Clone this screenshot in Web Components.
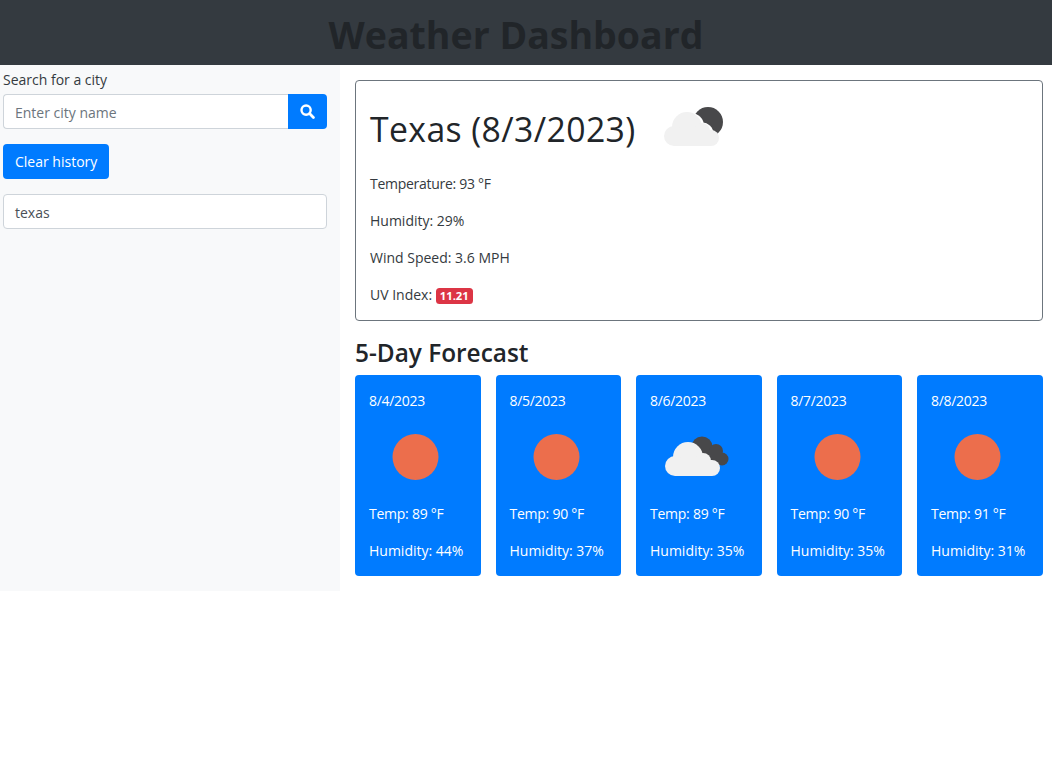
<!DOCTYPE html>
<html lang="en">
<head>
<meta charset="utf-8">
<title>Weather Dashboard</title>
<style>
  body { margin: 0; background: #fff; color: #212529; font-family: "Open Sans", "Noto Sans", sans-serif; font-size: 14px; line-height: 22.5px; }
</style>
</head>
<body>
<weather-app></weather-app>

<script>
// icons are laid out in a 94x94 box, same as the png they stand in for
const CLOUD = `
  <circle cx="38" cy="47" r="15"/><circle cx="25" cy="56" r="10"/>
  <circle cx="53" cy="51" r="8"/><circle cx="62" cy="58" r="8"/>
  <rect x="25" y="50" width="37" height="16"/>`;

const ICONS = {
  sun: { box: '0 0 94 94', w: 94, h: 94, body: `<circle cx="46.5" cy="47" r="23" fill="#ec6e4c"/>` },
  clouds: {
    box: '0 0 94 94', w: 94, h: 94,
    body: `<g fill="#48484a"><circle cx="52" cy="37" r="10.5"/><circle cx="66" cy="41" r="7"/><circle cx="72" cy="49" r="6.5"/><rect x="50" y="40" width="22" height="15"/></g>
           <g fill="#f1f1f1">${CLOUD}</g>`
  },
  moon: {
    box: '0 18 94 62', w: 94, h: 62,
    body: `<circle cx="59" cy="42" r="15" fill="#48484a"/>
           <g fill="#fff"><circle cx="42" cy="46" r="13"/><circle cx="53" cy="54" r="11.5"/><circle cx="62" cy="60" r="8"/></g>
           <g fill="#f1f1f1">${CLOUD}</g>`
  }
};

class WeatherIcon extends HTMLElement {
  connectedCallback() {
    const icon = ICONS[this.getAttribute('type')] || ICONS.sun;
    this.attachShadow({ mode: 'open' }).innerHTML = `
      <style>:host { display: block; line-height: 0; } svg { display: block; }</style>
      <svg width="${icon.w}" height="${icon.h}" viewBox="${icon.box}">${icon.body}</svg>`;
  }
}

class AppHeader extends HTMLElement {
  connectedCallback() {
    this.attachShadow({ mode: 'open' }).innerHTML = `
      <style>
        :host { display: block; background: #343a40; height: 65px; }
        h1 { margin: 0; padding-right: 20px; text-align: center; font-size: 37.5px; line-height: 70px; font-weight: 700; color: #212529; }
      </style>
      <h1><slot></slot></h1>`;
  }
}

class CitySearch extends HTMLElement {
  connectedCallback() {
    this.attachShadow({ mode: 'open' }).innerHTML = `
      <style>
        :host { display: block; width: 340px; flex: none; box-sizing: border-box; background: #f8f9fa; padding: 4px 13px 0 3px; }
        label { display: block; height: 25px; line-height: 22px; color: #343a40; }
        .group { display: flex; height: 35px; }
        input { flex: 1; min-width: 0; box-sizing: border-box; border: 1px solid #ced4da; border-right: 0; border-radius: 4px 0 0 4px; padding: 3px 11px 0; font: inherit; background: #fff; outline: 0; }
        input::placeholder { color: #6c757d; opacity: 1; }
        button { border: 0; background: #007bff; color: #fff; font: inherit; cursor: pointer; }
        .go { width: 39px; border-radius: 0 4px 4px 0; display: flex; align-items: center; justify-content: center; padding: 0; }
        .clear { display: block; height: 35px; padding: 2px 12px 0; margin: 15px 0; border-radius: 4px; }
        .item { box-sizing: border-box; height: 35px; line-height: 36px; padding: 0 11px; background: #fff; border: 1px solid #ced4da; border-radius: 4px; color: #495057; }
      </style>
      <label for="city">Search for a city</label>
      <div class="group">
        <input id="city" placeholder="Enter city name">
        <button class="go" aria-label="Search">
          <svg width="15" height="15" viewBox="0 0 15 15" fill="none" stroke="#fff" style="margin: -1px 0 0 -1px">
            <circle cx="6.1" cy="6.1" r="4.6" stroke-width="2.4"/>
            <path d="M9.8 9.8 13.4 13.4" stroke-width="2.8" stroke-linecap="round"/>
          </svg>
        </button>
      </div>
      <button class="clear">Clear history</button>
      <div class="item">texas</div>`;
  }
}

class CurrentWeather extends HTMLElement {
  connectedCallback() {
    this.attachShadow({ mode: 'open' }).innerHTML = `
      <style>
        :host { display: block; box-sizing: border-box; height: 241px; border: 1px solid #6c757d; border-radius: 4px; padding: 14px; color: #343a40; }
        .title { display: flex; align-items: center; height: 68px; margin-bottom: 10px; }
        h2 { margin: 0; font-size: 33.75px; font-weight: 400; line-height: 40px; white-space: nowrap; letter-spacing: .4px; color: #212529; }
        weather-icon { margin-left: 13px; }
        ::slotted(p) { margin: 0 0 14.5px; }
        ::slotted(.tight) { letter-spacing: -.28px; }
      </style>
      <div class="title">
        <h2>${this.getAttribute('heading')}</h2>
        <weather-icon type="${this.getAttribute('icon')}"></weather-icon>
      </div>
      <slot></slot>`;
  }
}

class UvBadge extends HTMLElement {
  connectedCallback() {
    this.attachShadow({ mode: 'open' }).innerHTML = `
      <style>
        :host { display: inline-block; background: #dc3545; color: #fff; border-radius: 3.5px; padding: 0 4px; font-size: 11.25px; font-weight: 700; line-height: 16px; vertical-align: 0; }
      </style>
      <slot></slot>`;
  }
}

class ForecastCard extends HTMLElement {
  connectedCallback() {
    this.attachShadow({ mode: 'open' }).innerHTML = `
      <style>
        :host { display: block; box-sizing: border-box; height: 201px; background: #007bff; color: #fff; border-radius: 4px; padding: 14px; }
        p { margin: 0; white-space: nowrap; }
        .date { margin-top: 1px; letter-spacing: -.3px; }
        weather-icon { margin-top: -3px; }
        .temp { margin: -1px 0 14.5px; letter-spacing: -.25px; }
      </style>
      <p class="date">${this.getAttribute('date')}</p>
      <weather-icon type="${this.getAttribute('icon')}"></weather-icon>
      <p class="temp">Temp: ${this.getAttribute('temp')} °F</p>
      <p>Humidity: ${this.getAttribute('humidity')}%</p>`;
  }
}

class WeatherApp extends HTMLElement {
  connectedCallback() {
    const days = [
      ['8/4/2023', 'sun', 89, 44],
      ['8/5/2023', 'sun', 90, 37],
      ['8/6/2023', 'clouds', 89, 35],
      ['8/7/2023', 'sun', 90, 35],
      ['8/8/2023', 'sun', 91, 31]
    ];
    const cards = days.map(d => `<forecast-card date="${d[0]}" icon="${d[1]}" temp="${d[2]}" humidity="${d[3]}"></forecast-card>`).join('');

    this.attachShadow({ mode: 'open' }).innerHTML = `
      <style>
        :host { display: block; }
        .row { display: flex; }
        main { flex: 1; min-width: 0; padding: 15px 9px 15px 15px; }
        h3 { margin: 15px 0 5px; font-size: 24.4px; font-weight: 600; line-height: 34px; height: 34px; }
        .days { display: grid; grid-template-columns: repeat(5, 1fr); gap: 15px; margin-right: .5px; }
      </style>
      <app-header>Weather Dashboard</app-header>
      <div class="row">
        <city-search></city-search>
        <main>
          <current-weather heading="Texas (8/3/2023)" icon="moon">
            <p class="tight">Temperature: 93 °F</p>
            <p>Humidity: 29%</p>
            <p>Wind Speed: 3.6 MPH</p>
            <p>UV Index: <uv-badge>11.21</uv-badge></p>
          </current-weather>
          <h3>5-Day Forecast</h3>
          <div class="days">${cards}</div>
        </main>
      </div>`;
  }
}

customElements.define('weather-icon', WeatherIcon);
customElements.define('app-header', AppHeader);
customElements.define('city-search', CitySearch);
customElements.define('current-weather', CurrentWeather);
customElements.define('uv-badge', UvBadge);
customElements.define('forecast-card', ForecastCard);
customElements.define('weather-app', WeatherApp);
</script>
</body>
</html>
